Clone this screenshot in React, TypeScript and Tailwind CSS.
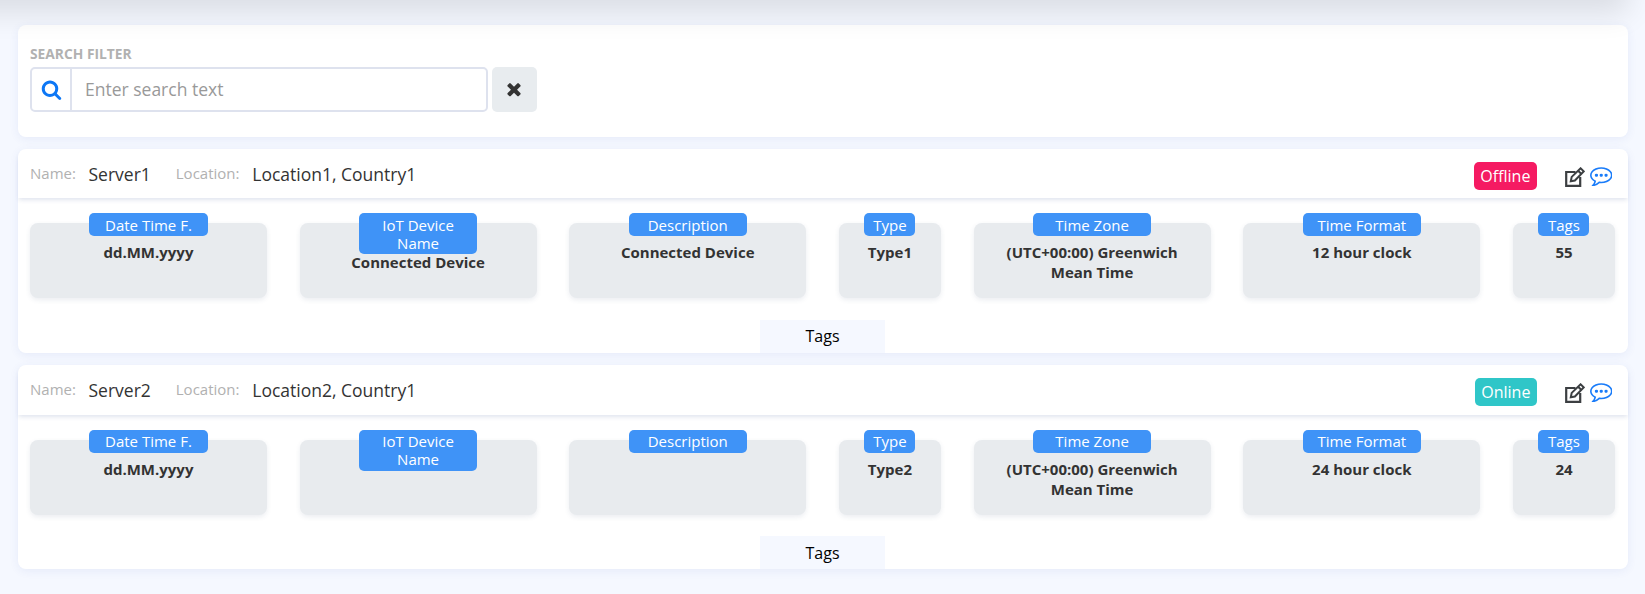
import React from "react";

type Field = { label: string; value: string; narrow?: boolean };
type Server = {
  name: string;
  location: string;
  online: boolean;
  fields: Field[];
};

const makeFields = (device: string, description: string, type: string, format: string, tags: string): Field[] => [
  { label: "Date Time F.", value: "dd.MM.yyyy" },
  { label: "IoT Device Name", value: device },
  { label: "Description", value: description },
  { label: "Type", value: type, narrow: true },
  { label: "Time Zone", value: "(UTC+00:00) Greenwich Mean Time" },
  { label: "Time Format", value: format },
  { label: "Tags", value: tags, narrow: true },
];

const servers: Server[] = [
  {
    name: "Server1",
    location: "Location1, Country1",
    online: false,
    fields: makeFields("Connected Device", "Connected Device", "Type1", "12 hour clock", "55"),
  },
  {
    name: "Server2",
    location: "Location2, Country1",
    online: true,
    fields: makeFields("", "", "Type2", "24 hour clock", "24"),
  },
];

function SearchIcon() {
  return (
    <svg viewBox="0 0 1792 1792" className="size-[21px]" fill="#0d77f5">
      <path d="M1216 832q0-185-131.5-316.5t-316.5-131.5-316.5 131.5-131.5 316.5 131.5 316.5 316.5 131.5 316.5-131.5 131.5-316.5zm512 832q0 52-38 90t-90 38q-54 0-90-38l-343-342q-179 124-399 124-143 0-273.5-55.5t-225-150-150-225-55.5-273.5 55.5-273.5 150-225 225-150 273.5-55.5 273.5 55.5 225 150 150 225 55.5 273.5q0 220-124 399l343 343q37 37 37 90z" />
    </svg>
  );
}

function ClearIcon() {
  return (
    <svg viewBox="0 0 1792 1792" className="mr-[2px] mb-[2px] size-[20px]" fill="#333">
      <path d="M1490 1322q0 40-28 68l-136 136q-28 28-68 28t-68-28l-294-294-294 294q-28 28-68 28t-68-28l-136-136q-28-28-28-68t28-68l294-294-294-294q-28-28-28-68t28-68l136-136q28-28 68-28t68 28l294 294 294-294q28-28 68-28t68 28l136 136q28 28 28 68t-28 68l-294 294 294 294q28 28 28 68z" />
    </svg>
  );
}

function EditIcon() {
  return (
    <svg viewBox="0 0 20 20" className="size-5" fill="none" stroke="#3c3f42" strokeWidth="2.2">
      <path d="M10.5 5H1.2v13.8h14V10" />
      <path d="M5.8 14.2l.9-4.3L15.6 1.3l3.1 3.1-8.8 9.1zM13.1 3.7l3.1 3.1" strokeWidth="2" />
    </svg>
  );
}

function CommentIcon() {
  return (
    <svg viewBox="0 0 1792 1792" className="size-[22.5px]" fill="#1a7cf9">
      <path d="M640 896q0 53-37.5 90.5t-90.5 37.5-90.5-37.5-37.5-90.5 37.5-90.5 90.5-37.5 90.5 37.5 37.5 90.5zm384 0q0 53-37.5 90.5t-90.5 37.5-90.5-37.5-37.5-90.5 37.5-90.5 90.5-37.5 90.5 37.5 37.5 90.5zm384 0q0 53-37.5 90.5t-90.5 37.5-90.5-37.5-37.5-90.5 37.5-90.5 90.5-37.5 90.5 37.5 37.5 90.5zm-512-512q-204 0-381.5 69.5t-282 187.5-104.5 255q0 112 71.5 213.5t201.5 175.5l87 50-27 96q-24 91-70 172 152-63 275-171l43-38 57 6q69 8 130 8 204 0 381.5-69.5t282-187.5 104.5-255-104.5-255-282-187.5-381.5-69.5zm896 512q0 174-120 321.5t-326 233-450 85.5q-70 0-145-8-198 175-460 242-49 14-114 22h-5q-15 0-27-10.5t-16-27.5v-1q-3-4-.5-12t2-10 4.5-9.5l6-9 7-8.5 8-9q7-8 31-34.5t34.5-38 31-39.5 32.5-51 27-59 26-76q-157-89-247.5-220t-90.5-281q0-174 120-321.5t326-233 450-85.5 450 85.5 326 233 120 321.5z" />
    </svg>
  );
}

function FieldBox({ label, value, narrow }: Field) {
  return (
    <div
      className={
        "h-[75px] rounded-lg bg-[#e8ebee] text-center shadow-[0_2px_5px_rgba(60,80,120,0.1)] " +
        (narrow ? "w-[102px]" : "w-[236.9px]")
      }
    >
      <div className="mx-auto -mt-[10px] w-1/2 rounded-[5px] bg-[#3f93f7] px-[5px] pt-[2.1px] pb-[2.9px] text-[15px] leading-[18px] text-white">
        {label}
      </div>
      <div
        className={
          "px-5 text-[15px] leading-[20px] font-bold text-[#333] " +
          (label === "IoT Device Name" ? "-mt-[2px]" : "mt-[6px]")
        }
      >
        {value}
      </div>
    </div>
  );
}

function ServerCard({ name, location, online, fields }: Server) {
  return (
    <section className="flex h-[204.1px] flex-col rounded-lg bg-white shadow-[0_2px_10px_rgba(50,80,180,0.08)]">
      <header className="flex h-[49.25px] shrink-0 items-center rounded-t-lg pr-4 pl-3 shadow-[0_3px_4px_-1px_rgba(60,90,150,0.16)]">
        <span className="-mt-px text-[15px] text-[#b1b1b1]">Name:</span>
        <span className="ml-[12.6px] w-[87.3px] text-[17.5px] text-[#333]">{name}</span>
        <span className="-mt-px text-[15px] text-[#b1b1b1]">Location:</span>
        <span className="ml-[12.8px] text-[17.5px] text-[#333]">{location}</span>
        <span
          className={
            "mt-[5px] ml-auto flex h-7 items-center rounded-[5px] px-[6.3px] text-base text-white " +
            (online ? "bg-[#2fc6c8]" : "bg-[#f51a62]")
          }
        >
          {online ? "Online" : "Offline"}
        </span>
        <span className="mt-[7px] ml-[27.8px]">
          <EditIcon />
        </span>
        <span className="mt-[2px] ml-[5px]">
          <CommentIcon />
        </span>
      </header>
      <div className="flex justify-between px-3 pt-[25px] pr-[13px]">
        {fields.map((f) => (
          <FieldBox key={f.label} {...f} />
        ))}
      </div>
      <button className="mt-auto mr-auto ml-[742px] h-[33px] w-[125px] bg-[#f5f8ff] pb-[0.7px] text-base text-black">
        Tags
      </button>
    </section>
  );
}

export default function App() {
  return (
    <div className="relative h-[594px] overflow-hidden bg-[#f5f8ff] pt-[25px] pr-[17px] pl-[18px] font-['Open_Sans',sans-serif]">
      <div className="pointer-events-none absolute -top-[60px] -left-[60px] h-[60px] w-[1688px] shadow-[0_13px_30px_rgba(0,0,0,0.11)]" />
      <section className="h-28 rounded-lg bg-white px-3 pt-[19px] shadow-[0_2px_10px_rgba(50,80,180,0.08)]">
        <div className="h-[23px] text-[13.8px] leading-[20px] font-bold text-[#b1b1b1]">SEARCH FILTER</div>
        <div className="flex gap-1">
          <div className="flex h-[45px] w-[458px] rounded-[5px] border-2 border-[#dee2ee]">
            <span className="flex w-[40px] items-center justify-center border-r-2 border-[#dee2ee]">
              <SearchIcon />
            </span>
            <input
              className="min-w-0 flex-1 px-[13px] text-[17.5px] text-[#333] outline-none placeholder:text-[#999]"
              placeholder="Enter search text"
            />
          </div>
          <button className="flex h-[45px] w-[45px] items-center justify-center rounded-[5px] bg-[#e8ecef]">
            <ClearIcon />
          </button>
        </div>
      </section>
      <main className="mt-[12.2px] flex flex-col gap-3">
        {servers.map((s) => (
          <ServerCard key={s.name} {...s} />
        ))}
      </main>
    </div>
  );
}
